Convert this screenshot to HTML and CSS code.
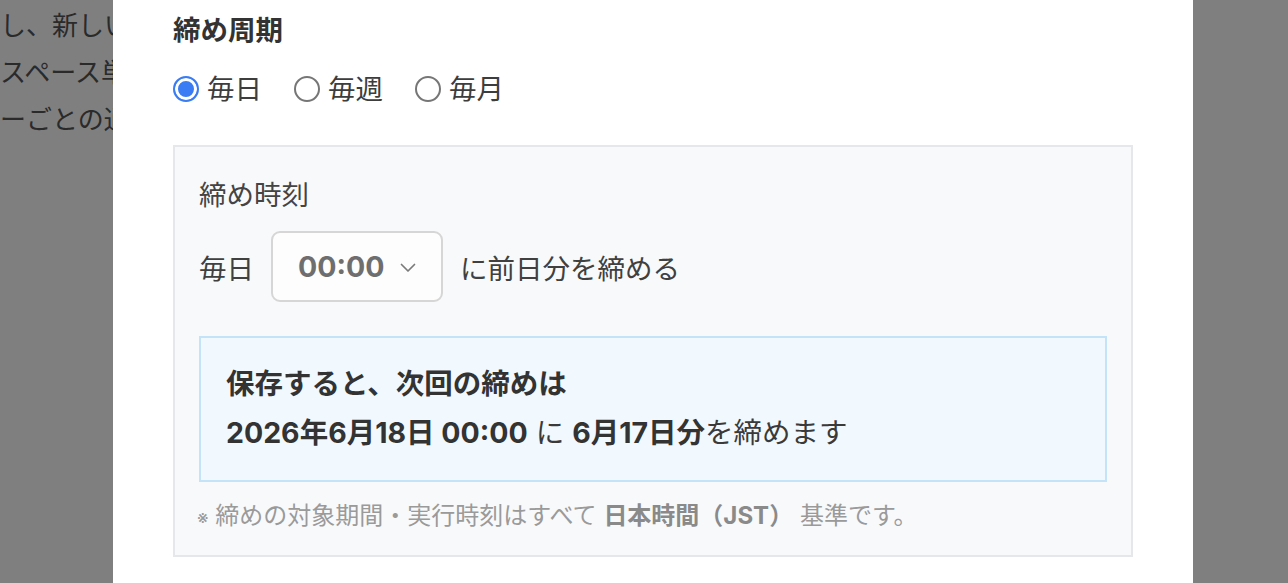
FILE: index.html
```html
<!DOCTYPE html>
<html lang="ja">
<head>
<meta charset="utf-8">
<title>締め設定</title>
<link rel="stylesheet" href="styles.css">
</head>
<body>
<div class="page">
  <p class="page-line">し、新しい</p>
  <p class="page-line">スペース単</p>
  <p class="page-line">ーごとの通</p>
</div>
<div class="overlay">
  <div class="modal">
    <h3 class="section-title">締め周期</h3>
    <div class="radios">
      <label class="radio"><span class="radio-dot is-checked"></span>毎日</label>
      <label class="radio"><span class="radio-dot"></span>毎週</label>
      <label class="radio"><span class="radio-dot"></span>毎月</label>
    </div>
    <div class="panel">
      <div class="panel-label">締め時刻</div>
      <div class="time-row">
        <span>毎日</span>
        <div class="select">
          <span class="select-value">00:00</span>
          <svg class="chevron" width="16" height="10" viewBox="0 0 16 10"><polyline points="1.5,1.5 8,8 14.5,1.5" fill="none" stroke="#7a7a7a" stroke-width="1.7" stroke-linecap="round" stroke-linejoin="round"/></svg>
        </div>
        <span>に前日分を締める</span>
      </div>
      <div class="summary">
        <p class="summary-line summary-title">保存すると、次回の締めは</p>
        <p class="summary-line"><b>2026年6月18日 00:00</b> に <b>6月17日分</b>を締めます</p>
      </div>
      <p class="note"><span class="note-mark">※</span> 締めの対象期間・実行時刻はすべて <b>日本時間（JST）</b> 基準です。</p>
    </div>
  </div>
</div>
</body>
</html>
```

FILE: styles.css
```css
* { box-sizing: border-box; }
html, body { margin: 0; padding: 0; }
body {
  font-family: "Inter", "Noto Sans CJK JP", sans-serif;
  background: #ffffff;
  color: #404040;
  height: 583px;
  overflow: hidden;
}
.page {
  padding-top: 2px;
}
.page-line {
  margin: 0;
  font-size: 26px;
  line-height: 47px;
  color: #555;
  white-space: nowrap;
}
.overlay {
  position: fixed;
  inset: 0;
  background: rgba(0, 0, 0, 0.5);
  display: flex;
  justify-content: center;
  padding-left: 18px;
}
.modal {
  width: 1080px;
  height: 100%;
  background: #fff;
  padding: 10px 60px 0;
}
.section-title {
  margin: 0;
  font-size: 27.5px;
  line-height: 40px;
  font-weight: 700;
  color: #333;
}
.radios {
  display: flex;
  gap: 32px;
  margin-top: 19px;
  font-size: 27.5px;
  line-height: 40px;
  color: #3d3d3d;
}
.radio {
  display: flex;
  align-items: center;
  gap: 8px;
}
.radio-dot {
  width: 26px;
  height: 26px;
  border-radius: 50%;
  border: 2px solid #767676;
  background: #fff;
}
.radio-dot.is-checked {
  border: 2.5px solid #3a7cf3;
  background: #3a7cf3;
  box-shadow: inset 0 0 0 3px #fff;
}
.panel {
  margin-top: 36px;
  border: 2px solid #e5e7ea;
  background: #f8f9fb;
  padding: 28px 24px 20px;
}
.panel-label {
  font-size: 27.5px;
  line-height: 40px;
  color: #444;
}
.time-row {
  display: flex;
  align-items: center;
  gap: 17px;
  margin-top: 16px;
  font-size: 27.5px;
  color: #404040;
}
.select {
  width: 172px;
  height: 71px;
  border: 2px solid #d6d6d6;
  border-radius: 9px;
  background: #fdfdfd;
  display: flex;
  align-items: center;
  padding-left: 25px;
  gap: 16px;
}
.select-value {
  font-weight: 700;
  color: #6e6e6e;
  font-size: 28.5px;
}
.chevron { display: block; margin-top: 2px; }
.summary {
  margin-top: 34px;
  border: 2px solid #c4e2f8;
  background: #f1f8fe;
  padding: 21px 25px 23px;
}
.summary-line {
  margin: 0;
  font-size: 28.5px;
  line-height: 49px;
  color: #3a3a3a;
}
.summary-line b, .summary-title {
  font-weight: 700;
  color: #333;
}
.note {
  margin: 17px 0 0 -2px;
  font-size: 24px;
  line-height: 34px;
  color: #9a9a9a;
}
.note-mark { font-size: 18px; }
.note b { font-weight: 700; color: #8a8a8a; }
```
